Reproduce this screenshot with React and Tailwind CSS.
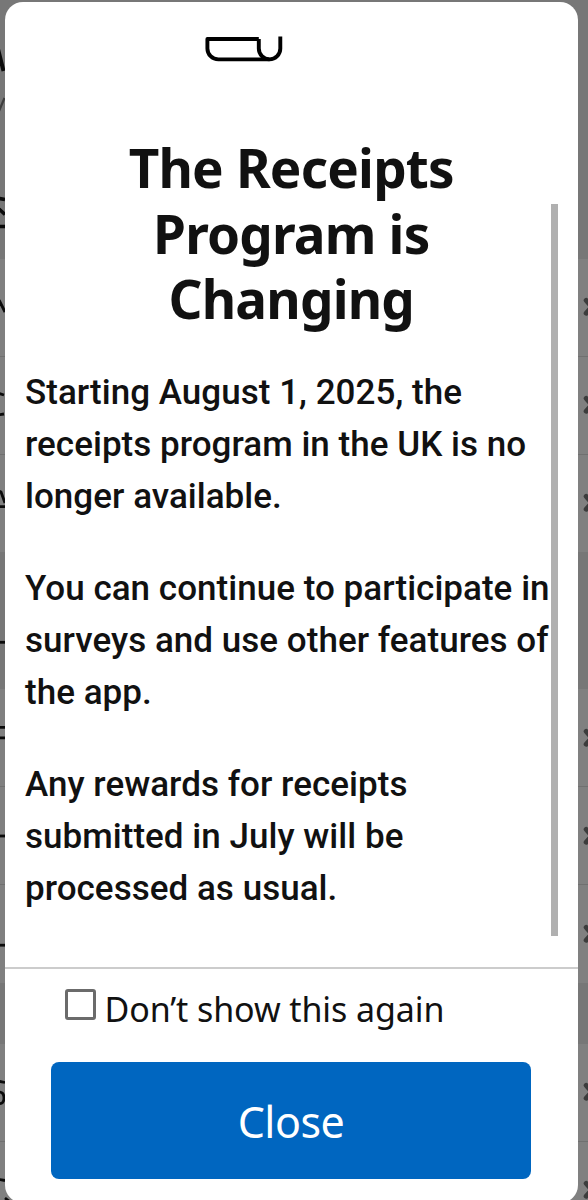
import React from "react";

const HEADING = ["The Receipts", "Program is", "Changing"];

const PARAGRAPHS = [
  ["Starting August 1, 2025, the", "receipts program in the UK is no", "longer available."],
  ["You can continue to participate in", "surveys and use other features of", "the app."],
  ["Any rewards for receipts", "submitted in July will be", "processed as usual."],
];

function Chevron() {
  return (
    <svg className="h-5 w-[5px] shrink-0" viewBox="0 0 5 20" fill="none" stroke="#3c3c3c" strokeWidth="5" strokeLinecap="round" strokeLinejoin="round">
      <path d="M3.2 3.4 9 10 3.2 16.2" />
    </svg>
  );
}

function Tail({ children }) {
  return (
    <svg className="h-10 w-3 shrink-0" viewBox="0 0 12 40" fill="none" stroke="#0b0b0b" strokeWidth="2.8">
      {children}
    </svg>
  );
}

function Row({ children, last }) {
  return (
    <div className={"flex h-[97.8px] shrink-0 items-center justify-between bg-[#808080] " + (last ? "" : "border-b border-[#707070]")}>
      <Tail>{children}</Tail>
      <Chevron />
    </div>
  );
}

function Backdrop() {
  return (
    <div className="flex h-[1200px] w-[588px] flex-col overflow-hidden bg-[#777777]">
      <div className="flex h-[259px] shrink-0 flex-col pt-[42px]">
        <Tail><path d="M-2 7 3.5 29" strokeWidth="4" /></Tail>
        <div className="h-[2px]" />
        <Tail><path d="M-1 27 4.5 14" stroke="#3d3d3d" strokeWidth="2.2" /></Tail>
        <div className="h-[68px]" />
        <Tail><path d="M-1 6.5 5 7.5M-1 17 5 22.5M-1 34.5H5" strokeWidth="3.6" /></Tail>
      </div>
      <Row><path d="M-1 13 5 25" /></Row>
      <Row><path d="M-1 8.5 4 10M-1 29.8 4 29" /></Row>
      <Row last><path d="M-1 8 1 9 5 20M0 23.7H5" /></Row>
      <div className="flex h-[137px] shrink-0 items-start pt-[70px]">
        <Tail><path d="M0 20.3H5" /></Tail>
      </div>
      <Row><path d="M0 9.3H5M0 19.9H5" /></Row>
      <Row><path d="M0 20H5" /></Row>
      <Row last><path d="M0 31.2H5" /></Row>
      <div className="h-[61px] shrink-0" />
      <Row><path d="M-1 9.3 5 10.5M-1 20Q4 20 4 26T-1 31.5" /></Row>
      <Row last><path d="M-1 9.5 5 10.5M5 28 9 31" /></Row>
    </div>
  );
}

function ReceiptIcon() {
  return (
    <svg className="h-[28px] w-[80px] shrink-0" viewBox="0 0 80 28" fill="none" stroke="#000" strokeWidth="3.9" strokeLinejoin="round">
      <path d="M54.8 3H3.4V12.4A11 11 0 0 0 14.4 23.4H65.5" />
      <path d="M54.8 3V12.6A10.75 10.75 0 0 0 76.3 12.6V0.4" />
    </svg>
  );
}

export default function App() {
  return (
    <div className="relative h-[1200px] w-[588px] overflow-hidden">
      <Backdrop />
      <div className="absolute left-[4.5px] top-[2px] flex h-[1201px] w-[573.5px] flex-col rounded-[18px] bg-white text-[#111111]">
        <div className="flex h-[965px] shrink-0 flex-col">
          <div className="flex h-[133px] shrink-0 pl-[199px] pt-[34px]">
            <ReceiptIcon />
          </div>
          <h1 className="flex shrink-0 flex-col items-center font-['Noto_Sans'] text-[53px] leading-[65.5px] font-bold tracking-[-0.8px]">
            {HEADING.map((line) => (
              <span key={line} className="whitespace-nowrap">{line}</span>
            ))}
          </h1>
          <div className="flex flex-col gap-[40.4px] pl-[20.5px] pt-[35px] font-['Roboto'] text-[35px] leading-[52px] font-medium tracking-[0.03px]">
            {PARAGRAPHS.map((lines) => (
              <p key={lines[0]} className="flex flex-col whitespace-nowrap">
                {lines.map((line) => <span key={line}>{line}</span>)}
              </p>
            ))}
          </div>
        </div>
        <div className="flex grow flex-col border-t-2 border-[#cccccc] pl-[46.5px]">
          <label className="flex h-[93px] items-start pl-[14px] pt-[19px]">
            <span className="mt-[1px] h-[31px] w-[31px] rounded-[3px] border-3 border-[#6b6b6b] bg-white" />
            <span className="-mt-px ml-[8.5px] font-['Noto_Sans'] text-[34px] leading-[44px] tracking-[-0.1px] whitespace-nowrap">Don’t show this again</span>
          </label>
          <button className="flex h-[117px] w-[480px] items-center justify-center rounded-[8px] bg-[#0066c0] pt-[3px] font-['Noto_Sans'] text-[43px] tracking-[-0.5px] text-white">
            Close
          </button>
        </div>
        <div className="absolute left-[546px] top-[202px] h-[732px] w-[7px] bg-[#b0b0b0]" />
      </div>
    </div>
  );
}
